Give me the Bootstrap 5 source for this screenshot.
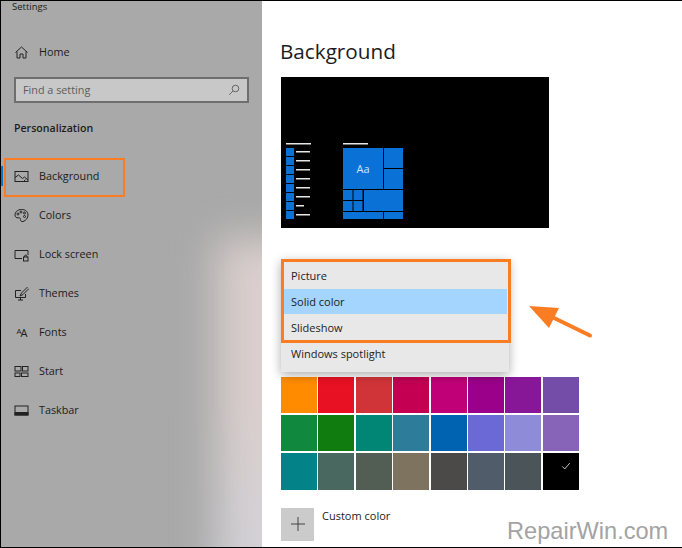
<!DOCTYPE html>
<html lang="en">
<head>
  <meta charset="UTF-8">
  <meta name="viewport" content="width=device-width, initial-scale=1.0">
  <title>Settings</title>
  <link href="https://cdn.jsdelivr.net/npm/bootstrap@5.3.0/dist/css/bootstrap.min.css" rel="stylesheet">
  <style>
    html, body { height: 100%; overflow: hidden; }
    body {
      position: relative;
      background: #fff;
      font-family: "Open Sans", "Noto Sans", sans-serif;
      font-size: 11px;
      color: #1c1c1c;
      border-top: 1px solid #000;
      border-left: 1px solid #000;
      border-bottom: 1px solid #000;
    }
    .sidebar {
      position: relative;
      isolation: isolate;
      overflow: hidden;
      width: 261px;
      flex-shrink: 0;
      background-color: #a9a9a9;
      font-size: 10.8px;
    }
    /* soft light patch of the wallpaper behind the acrylic */
    .sidebar::before {
      content: "";
      position: absolute;
      z-index: -1;
      left: 216px;
      top: 238px;
      right: -60px;
      bottom: -60px;
      background: linear-gradient(180deg, #dacfcd 0, #dacfcd 45%, #d3d1d7 85%);
      filter: blur(20px);
    }
    .app-title { height: 12px; padding: 0 0 0 11px; font-size: 9.5px; line-height: 12px; }
    .nav-row { height: 39px; color: #1c1c1c; padding-left: 13px; gap: 10px; position: relative; }
    .nav-row svg, .nav-row .aa { width: 15px; flex-shrink: 0; }
    .nav-row svg { fill: none; stroke: #222; stroke-width: 1; }
    .nav-row:hover { color: #1c1c1c; }
    .home-row { margin-top: 20px; }
    .aa { font-size: 11px; line-height: 1; letter-spacing: -1px; text-align: center; }
    .aa small { font-size: 8px; vertical-align: 3px; }
    .search {
      margin: 5px 13px 0 13px;
      height: 26px;
      width: 235px;
      border: 2px solid #6e6e6e;
      background: #c8c8c8;
      padding: 0 7px;
      color: #5c5c5c;
    }
    .section { margin: 16px 0 0 13px; height: 19px; line-height: 19px; font-weight: 600; font-size: 10.6px; }
    .nav-list { margin-top: 19px; }
    .marker { position: absolute; left: -1px; top: 9px; width: 3px; height: 20px; background: #0078d7; }
    .hl-nav { position: absolute; left: 3px; top: 1px; width: 121px; height: 39px; border: 2px solid #fb7d23; }
    .main { padding: 35px 0 0 19px; min-width: 0; }
    .main h1 { font-size: 20.7px; font-weight: 400; line-height: 30px; margin: 0 0 11px -1px; color: #1c1c1c; }
    .preview { display: block; width: 268px; height: 151px; }
    .menu-wrap { position: relative; width: 228px; margin-top: 31px; z-index: 2; }
    .dropdown-menu.type-menu {
      display: block;
      position: static;
      width: 228px;
      min-width: 0;
      height: 113px;
      padding: 4px 2px 5px;
      background: #e8e8e8;
      border: 0;
      border-radius: 0;
      font-size: 11px;
      box-shadow: 0 3px 10px rgba(0, 0, 0, .32);
    }
    .type-menu .dropdown-item { height: 26px; line-height: 26px; padding: 0 0 0 8px; color: #1c1c1c; }
    .type-menu .dropdown-item.active {
      background: #a4d5fe;
      color: #1c1c1c;
      border-bottom: 1px solid #e8e8e8;
      line-height: 26px;
    }
    .hl-menu { position: absolute; left: 0; top: 0; width: 230px; height: 84px; border: 3px solid #fb7d23; }
    .swatches {
      display: grid;
      grid-template-columns: repeat(8, 36px);
      grid-auto-rows: 36.2px;
      column-gap: 1.4px;
      row-gap: 2px;
      margin-top: 5px;
    }
    .swatches div:nth-child(1) { background: #ff8c00; }
    .swatches div:nth-child(2) { background: #e81123; }
    .swatches div:nth-child(3) { background: #d13438; }
    .swatches div:nth-child(4) { background: #c30052; }
    .swatches div:nth-child(5) { background: #bf0077; }
    .swatches div:nth-child(6) { background: #9a0089; }
    .swatches div:nth-child(7) { background: #881798; }
    .swatches div:nth-child(8) { background: #744da9; }
    .swatches div:nth-child(9) { background: #10893e; }
    .swatches div:nth-child(10) { background: #107c10; }
    .swatches div:nth-child(11) { background: #018574; }
    .swatches div:nth-child(12) { background: #2d7d9a; }
    .swatches div:nth-child(13) { background: #0063b1; }
    .swatches div:nth-child(14) { background: #6b69d6; }
    .swatches div:nth-child(15) { background: #8e8cd8; }
    .swatches div:nth-child(16) { background: #8764b8; }
    .swatches div:nth-child(17) { background: #038387; }
    .swatches div:nth-child(18) { background: #486860; }
    .swatches div:nth-child(19) { background: #525e54; }
    .swatches div:nth-child(20) { background: #7e735f; }
    .swatches div:nth-child(21) { background: #4c4a48; }
    .swatches div:nth-child(22) { background: #515c6b; }
    .swatches div:nth-child(23) { background: #4a5459; }
    .swatches div:nth-child(24) { background: #000; }
    .custom { margin-top: 18px; gap: 8px; }
    .custom .plus { width: 33px; height: 33px; background: #cbcbcb; }
    .arrow { position: absolute; left: 525px; top: 301px; }
    .watermark {
      position: absolute;
      left: 506px;
      top: 515px;
      font-family: "Liberation Sans", Arial, sans-serif;
      font-size: 23.6px;
      line-height: 30px;
      color: #a3a3a3;
      z-index: 3;
    }
  </style>
</head>
<body>
  <div class="d-flex h-100">
    <!-- left menu -->
    <aside class="sidebar">
      <div class="app-title">Settings</div>

      <a class="nav-row home-row d-flex align-items-center text-decoration-none" href="#">
        <svg viewBox="0 0 15 15" height="15"><path d="M1.5 7.5 7.5 2l6 5.5M3 6.500V13h3V9h3v4h3V6.500"/></svg>
        <span>Home</span>
      </a>

      <div class="search d-flex align-items-center justify-content-between">
        <span>Find a setting</span>
        <svg viewBox="0 0 12 12" width="12" height="12" fill="none" stroke="#666"><circle cx="7.5" cy="4.5" r="3.3"/><path d="M5 7 1.2 10.8"/></svg>
      </div>

      <div class="section">Personalization</div>

      <nav class="nav-list">
        <a class="nav-row d-flex align-items-center text-decoration-none" href="#">
          <span class="marker"></span>
          <svg viewBox="0 0 15 15" height="15"><rect x="1" y="2.5" width="13" height="10"/><path d="M1 8.5 4.5 6l4 3.5 2-1.500 3.500 3M9.500 12.500l2-2"/></svg>
          <span>Background</span>
          <span class="hl-nav"></span>
        </a>
        <a class="nav-row d-flex align-items-center text-decoration-none" href="#">
          <svg viewBox="0 0 15 15" height="15"><path d="M7.500 1.500C3.500 1.500 1 4 1 7c0 2 1.500 3 3 2.800 1.500-.2 2.500.2 2.500 1.700 0 1.500 1 2.500 2.500 2 3-1 5-3.500 5-6.500 0-3.300-2.500-5.500-6.500-5.500Z"/><circle cx="4" cy="6" r="1"/><circle cx="7" cy="4" r="1"/><circle cx="10.500" cy="5" r="1"/><circle cx="10.500" cy="8.500" r="1"/></svg>
          <span>Colors</span>
        </a>
        <a class="nav-row d-flex align-items-center text-decoration-none" href="#">
          <svg viewBox="0 0 15 15" height="15"><path d="M8 11.500H1v-8h13v4.500"/><rect x="9.500" y="10" width="4.500" height="4"/><path d="M10.500 10V9a1.300 1.300 0 0 1 2.500 0v1"/></svg>
          <span>Lock screen</span>
        </a>
        <a class="nav-row d-flex align-items-center text-decoration-none" href="#">
          <svg viewBox="0 0 15 15" height="15"><path d="M7 4.500H1.500v7h10V8M4 14h5M6.500 11.500V14"/><path d="M13.500 1 7.500 7l-1.500 3 3-1.500 6-6"/></svg>
          <span>Themes</span>
        </a>
        <a class="nav-row d-flex align-items-center text-decoration-none" href="#">
          <span class="aa"><small>A</small>A</span>
          <span>Fonts</span>
        </a>
        <a class="nav-row d-flex align-items-center text-decoration-none" href="#">
          <svg viewBox="0 0 15 15" height="15"><rect x="1" y="2.500" width="6" height="4.500"/><rect x="8.500" y="2.500" width="5.500" height="4.500"/><rect x="1" y="9" width="5" height="3.500"/><rect x="7.500" y="9" width="6.500" height="3.500"/></svg>
          <span>Start</span>
        </a>
        <a class="nav-row d-flex align-items-center text-decoration-none" href="#">
          <svg viewBox="0 0 15 15" height="15"><rect x="1" y="3" width="13" height="9"/><rect x="1" y="9.500" width="13" height="2.500" fill="#222"/></svg>
          <span>Taskbar</span>
        </a>
      </nav>
    </aside>

    <!-- right page -->
    <main class="main flex-grow-1">
      <h1>Background</h1>

      <svg class="preview" viewBox="0 0 268 151">
        <rect width="268" height="151" fill="#000"/>
        <g fill="#e6e6e6">
          <rect x="5" y="66" width="25" height="1.500"/>
          <rect x="62" y="66" width="25" height="1.500"/>
          <rect x="15" y="74" width="14" height="1.500"/>
          <rect x="15" y="83" width="14" height="1.500"/>
          <rect x="15" y="92" width="14" height="1.500"/>
          <rect x="15" y="101" width="14" height="1.500"/>
          <rect x="15" y="110" width="14" height="1.500"/>
          <rect x="15" y="119" width="14" height="1.500"/>
          <rect x="15" y="128" width="8" height="1.500"/>
          <rect x="15" y="137" width="14" height="1.500"/>
        </g>
        <g fill="#0a72d6">
          <rect x="5" y="71" width="8" height="8"/>
          <rect x="5" y="80" width="8" height="8"/>
          <rect x="5" y="89" width="8" height="8"/>
          <rect x="5" y="98" width="8" height="8"/>
          <rect x="5" y="107" width="8" height="8"/>
          <rect x="5" y="116" width="8" height="8"/>
          <rect x="5" y="125" width="8" height="8"/>
          <rect x="5" y="134" width="8" height="8"/>
          <rect x="62" y="71" width="40" height="41"/>
          <rect x="103" y="71" width="19" height="20"/>
          <rect x="103" y="92" width="19" height="20"/>
          <rect x="62" y="113" width="9.500" height="10"/>
          <rect x="72.500" y="113" width="9" height="10"/>
          <rect x="62" y="124" width="9.500" height="10"/>
          <rect x="72.500" y="124" width="9" height="10"/>
          <rect x="83" y="113" width="39" height="21"/>
          <rect x="62" y="135" width="40" height="7"/>
          <rect x="103" y="135" width="19" height="7"/>
        </g>
        <text x="82" y="96" text-anchor="middle" fill="#cfe4f8" font-family="Open Sans, sans-serif" font-size="11">Aa</text>
      </svg>

      <div class="menu-wrap">
        <div class="dropdown-menu type-menu">
          <a class="dropdown-item" href="#">Picture</a>
          <a class="dropdown-item active" href="#">Solid color</a>
          <a class="dropdown-item" href="#">Slideshow</a>
          <a class="dropdown-item" href="#">Windows spotlight</a>
        </div>
        <span class="hl-menu"></span>
      </div>

      <div class="swatches">
        <div></div><div></div><div></div><div></div><div></div><div></div><div></div><div></div>
        <div></div><div></div><div></div><div></div><div></div><div></div><div></div><div></div>
        <div></div><div></div><div></div><div></div><div></div><div></div><div></div>
        <div class="d-flex justify-content-end align-items-start">
          <svg class="m-2" viewBox="0 0 12 12" width="10" height="10" fill="none" stroke="#e8e8e8"><path d="M1.500 6.500 4.500 9.500 10.500 2.500"/></svg>
        </div>
      </div>

      <div class="custom d-flex align-items-start">
        <div class="plus d-flex align-items-center justify-content-center">
          <svg viewBox="0 0 14 14" width="14" height="14" stroke="#444"><path d="M7 0V14M0 7H14"/></svg>
        </div>
        <span>Custom color</span>
      </div>
    </main>
  </div>

  <!-- annotation arrow -->
  <svg class="arrow" width="70" height="40" viewBox="0 0 70 40">
    <polygon points="3,4 33,6 23,26" fill="#fb7d23"/>
    <path d="M24 14 64 33.500" stroke="#fb7d23" stroke-width="4" stroke-linecap="round"/>
  </svg>
  <div class="watermark">RepairWin.com</div>

  <script src="https://cdn.jsdelivr.net/npm/bootstrap@5.3.0/dist/js/bootstrap.bundle.min.js"></script>
</body>
</html>
